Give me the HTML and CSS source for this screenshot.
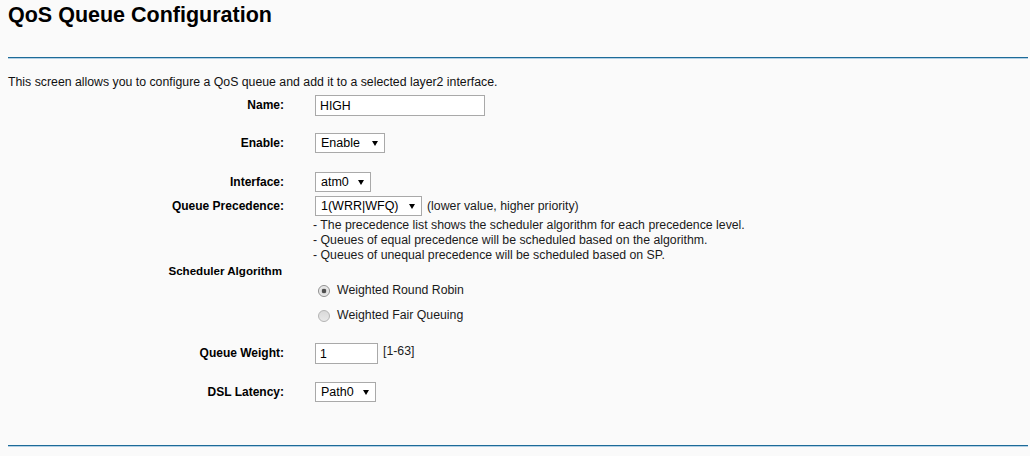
FILE: index.html
```html
<!DOCTYPE html>
<html lang="en">
<head>
    <meta charset="UTF-8">
    <meta name="viewport" content="width=device-width, initial-scale=1.0">
    <title>QoS Queue Configuration</title>
    <link rel="stylesheet" href="styles.css">
</head>
<body>
    <h1 class="title">QoS Queue Configuration</h1>
    <div class="rule"></div>

    <p class="intro">This screen allows you to configure a QoS queue and add it to a selected layer2 interface.</p>

    <div class="form">
        <div class="row row-name">
            <label class="label" for="name">Name:</label>
            <div class="field">
                <input type="text" id="name" class="text text-name" value="HIGH">
            </div>
        </div>

        <div class="row row-enable">
            <label class="label" for="enable">Enable:</label>
            <div class="field">
                <span class="select-wrap">
                    <select id="enable" class="select select-enable">
                        <option>Enable</option>
                        <option>Disable</option>
                    </select>
                </span>
            </div>
        </div>

        <div class="row row-interface">
            <label class="label" for="iface">Interface:</label>
            <div class="field">
                <span class="select-wrap">
                    <select id="iface" class="select select-iface">
                        <option>atm0</option>
                    </select>
                </span>
            </div>
        </div>

        <div class="row row-prec">
            <label class="label" for="prec">Queue Precedence:</label>
            <div class="field">
                <span class="select-wrap">
                    <select id="prec" class="select select-prec">
                        <option>1(WRR|WFQ)</option>
                        <option>2(WRR|WFQ)</option>
                    </select>
                </span>
                <span class="hint">(lower value, higher priority)</span>
            </div>
        </div>

        <div class="row row-notes">
            <span class="label"></span>
            <div class="notes">
                <div>- The precedence list shows the scheduler algorithm for each precedence level.</div>
                <div>- Queues of equal precedence will be scheduled based on the algorithm.</div>
                <div>- Queues of unequal precedence will be scheduled based on SP.</div>
            </div>
        </div>

        <div class="row row-sched">
            <span class="label">Scheduler Algorithm</span>
            <span></span>
        </div>

        <div class="row row-radio">
            <span class="label"></span>
            <label class="radio">
                <input type="radio" name="algo" checked>
                <span>Weighted Round Robin</span>
            </label>
        </div>
        <div class="row row-radio">
            <span class="label"></span>
            <label class="radio">
                <input type="radio" name="algo">
                <span>Weighted Fair Queuing</span>
            </label>
        </div>

        <div class="row row-weight">
            <label class="label" for="weight">Queue Weight:</label>
            <div class="field">
                <input type="text" id="weight" class="text text-weight" value="1">
                <span class="range">[1-63]</span>
            </div>
        </div>

        <div class="row row-latency">
            <label class="label" for="latency">DSL Latency:</label>
            <div class="field">
                <span class="select-wrap">
                    <select id="latency" class="select select-latency">
                        <option>Path0</option>
                        <option>Path1</option>
                    </select>
                </span>
            </div>
        </div>
    </div>

    <div class="rule rule-bottom"></div>
</body>
</html>
```

FILE: styles.css
```css
body {
    margin: 0;
    padding: 0 2px 0 8px;
    background-color: #fafafa;
    font-family: "Liberation Sans", Arial, sans-serif;
    font-size: 12.3px;
    color: #1a1a1a;
}

.title {
    margin: 0;
    padding-top: 3px;
    font-size: 21.5px;
    line-height: 25px;
    font-weight: bold;
    color: #000;
}

.rule {
    margin-top: 29px;
    border-top: 1px solid #1d6b98;
    border-bottom: 1px solid #b3d0e5;
}

.rule-bottom {
    margin-top: 43px;
}

.intro {
    margin: 16px 0 0;
    line-height: 15px;
    color: #111;
}

.row {
    display: grid;
    grid-template-columns: 276px auto;
    column-gap: 31px;
    align-items: center;
    justify-items: start;
}

.label {
    justify-self: end;
    font-size: 12px;
    font-weight: bold;
    color: #000;
    line-height: 15px;
}

.field {
    display: flex;
    align-items: center;
}

.row-name { margin-top: 5px; }
.row-enable { margin-top: 17px; }
.row-interface { margin-top: 19px; }
.row-prec { margin-top: 4px; }
.row-notes { margin-top: 2px; align-items: start; }
.row-weight { margin-top: 15px; }
.row-latency { margin-top: 18px; }

.row-sched .label {
    margin-right: 2px;
    font-size: 11.6px;
}

.text {
    box-sizing: border-box;
    height: 21px;
    margin: 0;
    padding: 0 4px;
    border: 1px solid #a9a9a9;
    border-radius: 0;
    background: #fff;
    font-family: "Liberation Sans", Arial, sans-serif;
    font-size: 12.3px;
    color: #000;
    outline: none;
}

.text-name { width: 170px; }
.text-weight { width: 63px; }

.range {
    align-self: flex-start;
    margin: 1px 0 0 5px;
    line-height: 15px;
}

.select-wrap {
    position: relative;
    display: inline-block;
}

.select-wrap::after {
    content: "";
    position: absolute;
    right: 7px;
    top: 8px;
    width: 0;
    height: 0;
    border-left: 3px solid transparent;
    border-right: 3px solid transparent;
    border-top: 5px solid #000;
    pointer-events: none;
}

.select {
    -webkit-appearance: none;
    appearance: none;
    box-sizing: border-box;
    height: 20px;
    margin: 0;
    padding: 0 0 0 5px;
    border: 1px solid #a9a9a9;
    border-radius: 0;
    background: #fff;
    font-family: "Liberation Sans", Arial, sans-serif;
    font-size: 12.5px;
    color: #000;
    outline: none;
}

.select-enable { width: 70px; }
.select-iface { width: 56px; }
.select-prec { width: 107px; }
.select-latency { width: 61px; }

.hint {
    margin-left: 5px;
    line-height: 15px;
}

.notes {
    margin-left: -2px;
    line-height: 15px;
}

.row-radio {
    height: 25px;
}

.radio {
    display: flex;
    align-items: center;
    line-height: 15px;
}

.radio input {
    -webkit-appearance: none;
    appearance: none;
    box-sizing: border-box;
    width: 12px;
    height: 12px;
    margin: 0 7px 0 3px;
    border: 1px solid #b4b4b4;
    border-radius: 50%;
    background: linear-gradient(#d9d9d9, #e8e8e8);
}

.radio input:checked {
    border-color: #8f8f8f;
    background: radial-gradient(circle, #4f4f4f 0 2px, #dcdcdc 2.6px, #eeeeee 5px);
}
```
